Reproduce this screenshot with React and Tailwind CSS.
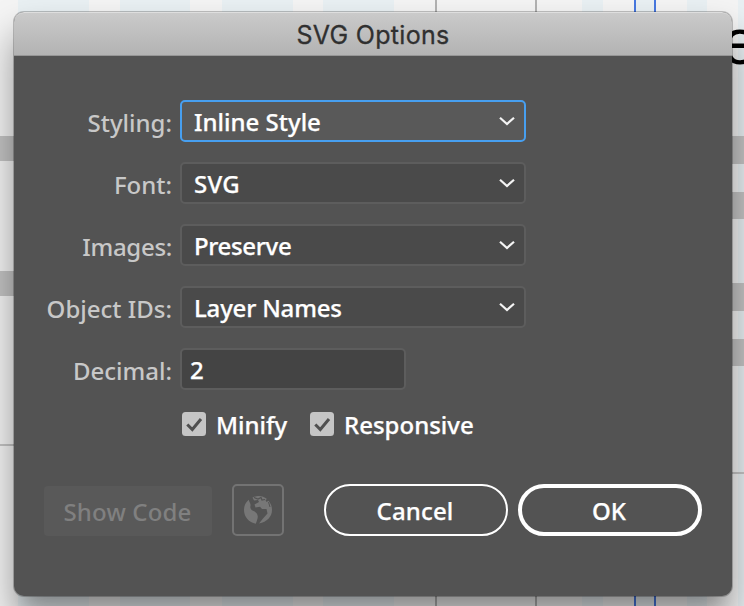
import React from "react";

const label = "w-[128px] text-right text-[24px] leading-[40px] font-medium text-[#c8c8c8] whitespace-nowrap pt-[4px]";
const bright = "font-medium text-white [-webkit-text-stroke:0.25px_white]";

function Chevron() {
  return (
    <svg width="18" height="12" viewBox="0 0 18 12" fill="none" stroke="#f4f4f4" strokeWidth="2.2">
      <path d="M2 2.700 9 9l7-6.300" />
    </svg>
  );
}

function SelectRow({ name, value, active, nameTracking = "", valueTracking = "" }) {
  return (
    <div className="flex h-[42px] items-center gap-[8px]">
      <div className={`${label} ${nameTracking}`}>{name}</div>
      <div
        className={`flex h-[42px] w-[346px] items-center justify-between rounded-[5px] border-2 pr-[8px] pl-[12px] ${
          active ? "border-[#479ff0] bg-[#595959]" : "border-[#5d5d5d] bg-[#4a4a4a]"
        }`}
      >
        <span className={`pt-[2px] text-[24px] whitespace-nowrap ${bright} ${valueTracking}`}>{value}</span>
        <Chevron />
      </div>
    </div>
  );
}

function Check({ text }) {
  return (
    <div className="flex h-[24px] items-center gap-[10px]">
      <svg width="24" height="24" viewBox="0 0 24 24">
        <rect width="24" height="24" rx="3.5" fill="#c5c5c5" />
        <path d="M5.3 12.5 10.3 17.5 19 7" fill="none" stroke="#505050" strokeWidth="3" />
      </svg>
      <span className={`pt-[1px] text-[24px] ${bright}`}>{text}</span>
    </div>
  );
}

function Globe() {
  return (
    <svg width="28" height="28" viewBox="0 0 28 28" fill="#777777">
      <path d="M4.700 3.700C1.500 6.300 0 10 0 14c0 7 5 12.500 11.800 13.800 1-3 2-5.300 2-7.300-.3-2.900-2-4.500-4.800-5.700C6.500 13.500 6 11.800 6.500 9.700 7 8 5.500 6.500 4.700 3.700Z" />
      <path d="M8.500 1.500 10 4.500l4-.5 1 2-4.500 2.500 1 3 4.500-.8 2 2.300h4.500l1 4.500-4.500 5-4 5C23 26 28 20.500 28 14c0-3.700-1.300-6.900-3.500-9.300l-2 1.300-1-2L23 3C18.700-.5 13.500-.8 8.500 1.500Z" />
      <path d="m10 1.500 4 1.500 3-1.500 1 2.500 3-.5" fill="none" stroke="#535353" strokeWidth="1.200" />
      <path d="m24.500 6 1.500 5" fill="none" stroke="#535353" strokeWidth="1" />
    </svg>
  );
}

const stripes = [
  [18, 71], [120, 70], [222, 71], [323, 71], [582, 21], [636, 18], [687, 20], [738, 6],
];
const verticals = [
  [435, 2, "#b2b2b2"], [535, 2, "#b2b2b2"], [634, 2, "#4778e0"], [654, 2, "#4778e0"],
];
const bands = [
  [0, 136, 14, 25], [0, 271, 14, 25], [0, 444, 14, 2],
  [732, 136, 12, 28], [732, 192, 12, 27], [732, 283, 12, 28], [732, 339, 12, 27], [732, 472, 12, 2],
];

function Canvas() {
  return (
    <div className="absolute inset-0 bg-[#f4f4f4]">
      {stripes.map(([left, width]) => (
        <div key={left} className="absolute inset-y-0 bg-[#e9f0f3]" style={{ left, width }} />
      ))}
      {verticals.map(([left, width, background]) => (
        <div key={left} className="absolute inset-y-0" style={{ left, width, background }} />
      ))}
      {bands.map(([left, top, width, height]) => (
        <div key={`${left}-${top}`} className="absolute bg-[#c4c4c4]" style={{ left, top, width, height }} />
      ))}
      <div className="absolute top-[5px] left-[722px] font-['Liberation_Sans'] text-[64px] leading-[74px] text-black">e</div>
    </div>
  );
}

export default function App() {
  return (
    <div className="relative h-[606px] w-[744px] overflow-hidden pt-[12px] pl-[14px] font-['Noto_Sans',sans-serif]">
      <Canvas />
      <div className="relative h-[584px] w-[718px] rounded-[10px] bg-[#535353] shadow-[0_0_0_1px_rgba(0,0,0,0.22),0_24px_36px_2px_rgba(0,0,0,0.36),0_18px_16px_-12px_rgba(0,0,0,0.15)]">
        <div className="flex h-[44px] items-center justify-center rounded-t-[10px] border-t border-b border-t-[#dedede] border-b-[#969696] bg-linear-to-b from-[#cacaca] to-[#b3b3b3] font-['Inter',sans-serif] text-[25px] tracking-[0.3px] text-[#303030]">
          <span className="pt-[4px] [-webkit-text-stroke:0.3px_#303030]">SVG Options</span>
        </div>
        <div className="flex flex-col gap-[20px] pt-[44px] pl-[30px]">
          <SelectRow name="Styling:" value="Inline Style" active />
          <SelectRow name="Font:" value="SVG" valueTracking="tracking-[0.3px]" />
          <SelectRow name="Images:" value="Preserve" nameTracking="tracking-[-0.3px]" valueTracking="tracking-[-0.35px]" />
          <SelectRow name="Object IDs:" value="Layer Names" valueTracking="tracking-[-0.2px]" />
          <div className="flex h-[42px] items-center gap-[8px]">
            <div className={label}>Decimal:</div>
            <div className={`flex h-[42px] w-[226px] items-center rounded-[5px] border-2 border-[#5d5d5d] bg-[#444444] pl-[8px] text-[24px] ${bright}`}>
              <span className="pt-[2px]">2</span>
            </div>
          </div>
        </div>
        <div className="mt-[22px] flex pl-[168px]">
          <div className="w-[128px]">
            <Check text="Minify" />
          </div>
          <Check text="Responsive" />
        </div>
        <div className={`mt-[48px] flex items-end pl-[30px] text-[24px] ${bright}`}>
          <div className="flex h-[50px] w-[168px] items-center justify-center rounded-[4px] bg-[#595959] font-medium text-[#808080] [-webkit-text-stroke:0]">
            <span className="pt-[2px] pr-[1px] tracking-[0.15px]">Show Code</span>
          </div>
          <div className="ml-[20px] flex h-[52px] w-[52px] items-center justify-center rounded-[5px] border-2 border-[#737373]">
            <Globe />
          </div>
          <div className="ml-[40px] flex h-[52px] w-[184px] items-center justify-center rounded-full border-2 border-white">
            <span className="pt-[2px] pr-[2px] tracking-[0.15px]">Cancel</span>
          </div>
          <div className="ml-[10px] flex h-[52px] w-[184px] items-center justify-center rounded-full border-4 border-white">
            <span className="pt-[2px] pr-[2px]">OK</span>
          </div>
        </div>
      </div>
    </div>
  );
}
